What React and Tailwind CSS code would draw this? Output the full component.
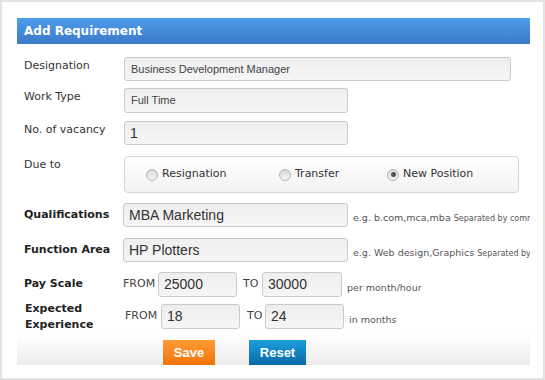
import React from 'react';

const verdana = "font-['DejaVu_Sans',Verdana,sans-serif]";
const arial = "font-['Liberation_Sans',Arial,sans-serif]";

function Field({ value, big, className }) {
  return (
    <div
      className={`shrink-0 h-[24px] flex items-center rounded-[3px] border border-[#cacaca] bg-gradient-to-b from-[#eeeeee] to-[#f6f6f6] text-[#333] ${arial} ${big ? 'text-[14px] pl-[5px]' : 'text-[11px] pl-[6px] text-[#444]'} ${className}`}
    >
      {value}
    </div>
  );
}

function Radio({ label, checked, className }) {
  return (
    <div className={`flex items-center gap-[4px] ${className}`}>
      <span className="h-[12px] w-[12px] rounded-full border border-[#b4b4b4] bg-gradient-to-b from-[#d8d8d8] to-[#f7f7f7] flex items-center justify-center">
        {checked && <span className="h-[5px] w-[5px] rounded-full bg-[#555]" />}
      </span>
      <span className="text-[11px] text-[#333]">{label}</span>
    </div>
  );
}

export default function App() {
  return (
    <div className={`w-[545px] h-[380px] bg-white border-2 border-[#e3e3e3] ${verdana}`}>
      <div className="ml-[15px] w-[513px] pt-[16px] overflow-hidden">
        {/* Header */}
        <div className="h-[26px] flex items-center pl-[7px] bg-gradient-to-b from-[#4f9cec] to-[#3a7ac8] text-white text-[12px] font-bold">
          Add Requirement
        </div>

        <div className="pl-[7px] pt-[13px] flex flex-col">
          <div className="flex items-start">
            <div className="w-[100px] shrink-0 pt-[2px] leading-[14px] text-[11px] text-[#333]">Designation</div>
            <Field value="Business Development Manager" className="w-[387px]" />
          </div>

          <div className="flex items-start mt-[7px]">
            <div className="w-[100px] shrink-0 pt-[2px] leading-[14px] text-[11px] text-[#333]">Work Type</div>
            <Field value="Full Time" className="w-[224px] h-[25px]" />
          </div>

          <div className="flex items-start mt-[8px]">
            <div className="w-[100px] shrink-0 pt-[2px] leading-[14px] text-[11px] text-[#333]">No. of vacancy</div>
            <Field value="1" big className="w-[224px] h-[23px]" />
          </div>

          <div className="flex items-start mt-[11px]">
            <div className="w-[100px] shrink-0 pt-[2px] leading-[14px] text-[11px] text-[#333]">Due to</div>
            <div className="shrink-0 w-[395px] h-[37px] rounded-[4px] border border-[#d4d4d4] bg-gradient-to-b from-white to-[#f2f2f2] flex items-center pl-[21px]">
              <Radio label="Resignation" className="w-[133px]" />
              <Radio label="Transfer" className="w-[108px]" />
              <Radio label="New Position" checked />
            </div>
          </div>

          <div className="flex items-center mt-[10px]">
            <div className="w-[100px] shrink-0 text-[11px] font-bold text-[#222] whitespace-nowrap">Qualifications</div>
            <Field value="MBA Marketing" big className="w-[225px] -ml-[1px]" />
            <div className="self-end pb-[2px] pl-[5px] flex items-baseline whitespace-nowrap text-[#555]">
              <span className="text-[9.5px]">e.g. b.com,mca,mba</span>
              <span className="text-[8px] ml-[3px]">Separated by comma</span>
            </div>
          </div>

          <div className="flex items-center mt-[11px]">
            <div className="w-[100px] shrink-0 text-[11px] font-bold text-[#222] whitespace-nowrap">Function Area</div>
            <Field value="HP Plotters" big className="w-[225px] -ml-[1px]" />
            <div className="self-end pb-[2px] pl-[5px] flex items-baseline whitespace-nowrap text-[#555]">
              <span className="text-[9.5px]">e.g. Web design,Graphics</span>
              <span className="text-[8px] ml-[3px]">Separated by comma</span>
            </div>
          </div>

          <div className="flex items-center mt-[10px]">
            <div className="w-[100px] shrink-0 text-[11px] font-bold text-[#222]">Pay Scale</div>
            <span className="shrink-0 text-[11px] text-[#444] w-[35px] -ml-[1px]">FROM</span>
            <Field value="25000" big className="w-[79px] h-[25px]" />
            <span className="shrink-0 text-[11px] text-[#444] ml-[6px] w-[19px]">TO</span>
            <Field value="30000" big className="w-[80px] h-[25px]" />
            <span className="self-end pb-[2px] pl-[5px] text-[9.5px] text-[#555] whitespace-nowrap">per month/hour</span>
          </div>

          <div className="flex items-center h-[25px] mt-[7px]">
            <div className="w-[100px] shrink-0 pl-[1px] text-[11px] font-bold text-[#222] leading-[16px]">
              Expected
              <br />
              Experience
            </div>
            <span className="shrink-0 text-[11px] text-[#444] w-[36px] ml-[1px]">FROM</span>
            <Field value="18" big className="w-[79px] h-[25px]" />
            <span className="shrink-0 text-[11px] text-[#444] ml-[7px] w-[18px]">TO</span>
            <Field value="24" big className="w-[79px] h-[25px]" />
            <span className="self-end pb-[2px] pl-[5px] text-[9.5px] text-[#555] whitespace-nowrap">in months</span>
          </div>
        </div>

        {/* Footer */}
        <div className="mt-[5px] h-[31px] bg-gradient-to-b from-white to-[#ececec] flex items-end pl-[146px]">
          <button className={`h-[25px] w-[52px] bg-gradient-to-b from-[#ff9c33] to-[#f07400] text-white text-[13px] font-bold ${arial}`}>
            Save
          </button>
          <button className={`ml-[34px] h-[25px] w-[57px] bg-gradient-to-b from-[#1c9edc] to-[#0a6aa8] text-white text-[13px] font-bold ${arial}`}>
            Reset
          </button>
        </div>
      </div>
    </div>
  );
}
